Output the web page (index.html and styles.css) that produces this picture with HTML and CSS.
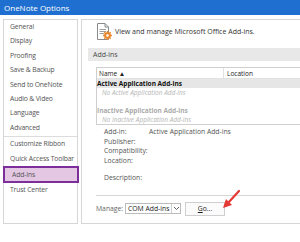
FILE: index.html
```html
<!DOCTYPE html>
<html>

<head>
    <link rel="stylesheet" href="styles.css">
</head>
<body>
    <div class="titlebar">OneNote Options</div>
    <div class="main">
        <div class="sidebar">
            <div class="item">General</div>
            <div class="item">Display</div>
            <div class="item">Proofing</div>
            <div class="item">Save &amp; Backup</div>
            <div class="item">Send to OneNote</div>
            <div class="item">Audio &amp; Video</div>
            <div class="item">Language</div>
            <div class="item">Advanced</div>
            <div class="sep"></div>
            <div class="item">Customize Ribbon</div>
            <div class="item">Quick Access Toolbar</div>
            <div class="item selected">Add-Ins</div>
            <div class="item">Trust Center</div>
        </div>
        <div class="content">
            <div class="intro">
                <svg class="intro-icon" width="16" height="17" viewBox="0 0 16 17">
                    <path d="M1.5 0.5 H9 L12.5 4 V16.5 H1.5 Z" fill="#fff" stroke="#8a8a8a"/>
                    <path d="M9 0.5 V4 H12.5" fill="none" stroke="#8a8a8a"/>
                    <path d="M3.5 6.5 H10 M3.5 8.5 H10 M3.5 10.5 H8" stroke="#a0a0a0"/>
                    <circle cx="11.5" cy="12.5" r="3.3" fill="#e8862a"/>
                    <path d="M11.5 8 V17 M7 12.5 H16 M8.3 9.3 L14.7 15.7 M14.7 9.3 L8.3 15.7" stroke="#e8862a" stroke-width="1.4"/>
                    <circle cx="11.5" cy="12.5" r="1.3" fill="#fff"/>
                </svg>
                <span>View and manage Microsoft Office Add-ins.</span>
            </div>
            <div class="section-head">Add-ins</div>
            <div class="addin-table">
                <div class="thead">
                    <div class="col-name">Name &#9650;</div>
                    <div class="col-loc">Location</div>
                </div>
                <div class="row group">Active Application Add-ins</div>
                <div class="row empty">No Active Application Add-ins</div>
                <div class="row"></div>
                <div class="row group-off">Inactive Application Add-ins</div>
                <div class="row empty">No Inactive Application Add-ins</div>
            </div>
            <div class="details">
                <div class="drow"><span class="dlabel">Add-in:</span><span>Active Application Add-ins</span></div>
                <div class="drow"><span class="dlabel">Publisher:</span></div>
                <div class="drow"><span class="dlabel">Compatibility:</span></div>
                <div class="drow"><span class="dlabel">Location:</span></div>
                <div class="drow desc"><span class="dlabel">Description:</span></div>
            </div>
            <div class="manage">
                <span class="manage-label">Manage:</span>
                <div class="select">
                    <span>COM Add-ins</span>
                    <span class="caret">
                        <svg width="7" height="5" viewBox="0 0 7 5"><path d="M1 1 L3.5 3.5 L6 1" fill="none" stroke="#666"/></svg>
                    </span>
                </div>
                <div class="go-btn"><u>G</u>o...</div>
            </div>
        </div>
    </div>
    <svg class="pointer" width="30" height="30" viewBox="0 0 30 30">
        <path d="M24 3 L13 15" stroke="#e53935" stroke-width="2.2" stroke-linecap="round"/>
        <path d="M8 20 L11 11 L17 17 Z" fill="#e53935"/>
    </svg>
</body>

</html>
```

FILE: styles.css
```css
* {
    margin: 0;
    box-sizing: border-box;
}

body {
    font-family: "Open Sans", "Noto Sans", sans-serif;
    font-size: 6.8px;
    color: #555;
    background-color: #fff;
    height: 242px;
    overflow: hidden;
    position: relative;
}

.titlebar {
    height: 15px;
    line-height: 15px;
    padding-left: 4px;
    background-color: #1f6fd0;
    color: #fff;
    font-size: 8px;
}

.main {
    display: flex;
    gap: 3px;
    padding: 4px 0 0 3px;
}

.sidebar {
    width: 75px;
    flex-shrink: 0;
    height: 205px;
    border: 1px solid #d6d6d6;
}

.item {
    line-height: 14.4px;
    padding-left: 6px;
    white-space: nowrap;
    letter-spacing: -0.15px;
}

.sep {
    height: 1px;
    margin-top: 1px;
    background-color: #dcdcdc;
}

.selected {
    line-height: 13px;
    margin-left: -1px;
    margin-right: -2px;
    padding-left: 7px;
    border: 2px solid #7c2f9a;
    background-color: #e4c8e3;
}

.content {
    flex: 1;
    min-width: 0;
    height: 205px;
    border: 1px solid #d6d6d6;
    border-right: none;
    overflow: hidden;
}

.intro {
    display: flex;
    align-items: center;
    gap: 3px;
    padding: 3px 0 0 14px;
    font-size: 7px;
    color: #333;
}

.section-head {
    margin: 8px 0 0 6px;
    height: 13px;
    line-height: 13px;
    padding-left: 5px;
    background-color: #e8e8e8;
    color: #4a4a4a;
    font-size: 7px;
}

.addin-table {
    margin: 6px 0 0 14px;
    border: 1px solid #cfcfcf;
    border-right: none;
    font-size: 6.5px;
}

.thead {
    display: flex;
    height: 11px;
    line-height: 11px;
    border-bottom: 1px solid #e2e2e2;
    color: #222;
}

.col-name {
    width: 127px;
    padding-left: 2px;
    border-right: 1px solid #e2e2e2;
}

.col-loc {
    padding-left: 3px;
}

.row {
    height: 9px;
    line-height: 9px;
    white-space: nowrap;
}

.group {
    background-color: #e6e6e6;
    color: #111;
    font-weight: bold;
}

.group-off {
    color: #aaa;
    font-weight: bold;
}

.empty {
    padding-left: 5px;
    color: #b5b5b5;
    font-style: italic;
}

.details {
    padding: 2px 0 0 22px;
}

.drow {
    display: flex;
    line-height: 9.5px;
}

.dlabel {
    width: 45px;
}

.desc {
    margin-top: 8px;
}

.manage {
    margin: 12px 0 0 14px;
    padding-top: 6px;
    border-top: 1px solid #d6d6d6;
    display: flex;
    align-items: center;
}

.manage-label {
    width: 29px;
    color: #666;
}

.select {
    display: flex;
    align-items: center;
    width: 56px;
    height: 11px;
    border: 1px solid #bcbcbc;
    padding-left: 2px;
    color: #222;
}

.select span:first-child {
    flex: 1;
}

.caret {
    display: flex;
    align-items: center;
    justify-content: center;
    width: 9px;
    height: 9px;
    border-left: 1px solid #d0d0d0;
}

.go-btn {
    margin-left: 4px;
    width: 40px;
    height: 14px;
    line-height: 12px;
    text-align: center;
    border: 1px solid #cfcfcf;
    background-color: #fbfbfb;
    color: #222;
}

.pointer {
    position: absolute;
    left: 215px;
    top: 188px;
}
```
